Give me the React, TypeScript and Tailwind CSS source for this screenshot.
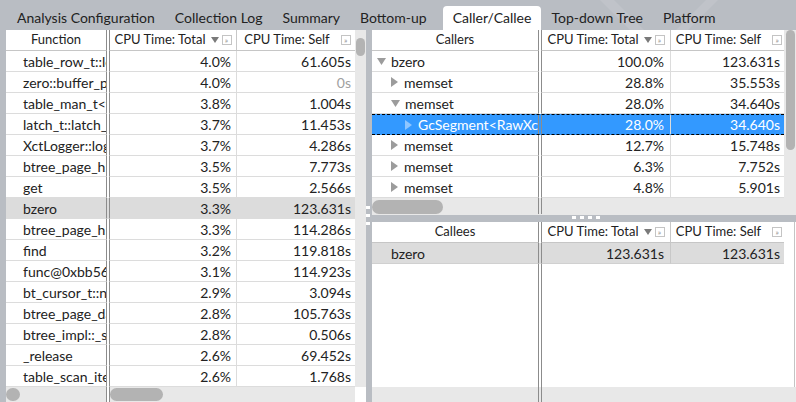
import React from 'react'

type Row = { name: string; total: string; self: string; dim?: boolean; hl?: boolean }

const leftRows: Row[] = [
  { name: 'table_row_t::load_from_store', total: '4.0%', self: '61.605s' },
  { name: 'zero::buffer_pool::fix', total: '4.0%', self: '0s', dim: true },
  { name: 'table_man_t<table_desc_t>', total: '3.8%', self: '1.004s' },
  { name: 'latch_t::latch_acquire', total: '3.7%', self: '11.453s' },
  { name: 'XctLogger::log', total: '3.7%', self: '4.286s' },
  { name: 'btree_page_h::search', total: '3.5%', self: '7.773s' },
  { name: 'get', total: '3.5%', self: '2.566s' },
  { name: 'bzero', total: '3.3%', self: '123.631s', hl: true },
  { name: 'btree_page_h::insert', total: '3.3%', self: '114.286s' },
  { name: 'find', total: '3.2%', self: '119.818s' },
  { name: 'func@0xbb5600', total: '3.1%', self: '114.923s' },
  { name: 'bt_cursor_t::next', total: '2.9%', self: '3.094s' },
  { name: 'btree_page_data::search', total: '2.8%', self: '105.763s' },
  { name: 'btree_impl::_sx_split', total: '2.8%', self: '0.506s' },
  { name: '_release', total: '2.6%', self: '69.452s' },
  { name: 'table_scan_iter_impl', total: '2.6%', self: '1.768s' },
]

type TreeRow = { name: string; depth: number; open?: boolean; total: string; self: string; sel?: boolean }

const callers: TreeRow[] = [
  { name: 'bzero', depth: 0, open: true, total: '100.0%', self: '123.631s' },
  { name: 'memset', depth: 1, total: '28.8%', self: '35.553s' },
  { name: 'memset', depth: 1, open: true, total: '28.0%', self: '34.640s' },
  { name: 'GcSegment<RawXctLog>', depth: 2, total: '28.0%', self: '34.640s', sel: true },
  { name: 'memset', depth: 1, total: '12.7%', self: '15.748s' },
  { name: 'memset', depth: 1, total: '6.3%', self: '7.752s' },
  { name: 'memset', depth: 1, total: '4.8%', self: '5.901s' },
]

const tabs = ['Analysis Configuration', 'Collection Log', 'Summary', 'Bottom-up', 'Caller/Callee', 'Top-down Tree', 'Platform']

function MoreBox() {
  return (
    <span className="inline-flex items-center justify-center w-[10px] h-[10px] border border-[#c4c4c4] text-[8px] leading-none text-[#8a8a8a] ml-[3px]">»</span>
  )
}

function SortDown() {
  return (
    <svg width="8" height="6" viewBox="0 0 8 6" className="ml-[5px]"><path d="M0 0h8L4 6z" fill="#7a7a7a" /></svg>
  )
}

function Expander({ open, light }: { open?: boolean; light?: boolean }) {
  const c = light ? '#8fc6ff' : '#9c9c9c'
  return open ? (
    <svg width="9" height="7" viewBox="0 0 9 7" className="mr-[5px] shrink-0"><path d="M0 0h9L4.5 7z" fill={c} /></svg>
  ) : (
    <svg width="7" height="10" viewBox="0 0 7 10" className="mr-[6px] shrink-0"><path d="M0 0l7 5-7 5z" fill={c} /></svg>
  )
}

function Thumb({ className }: { className: string }) {
  return <div className={`bg-[#b3b3b3] rounded-full ${className}`} />
}

function Header({ first, firstW, totalW, selfW }: { first: string; firstW: string; totalW: string; selfW: string }) {
  return (
    <div className="flex h-[21px] text-[13px]">
      <div className={`${firstW} border-r border-[#8c8c8c] border-b border-b-[#c6c6c6] flex items-center justify-center`}>{first}</div>
      <div className="w-[2px]" />
      <div className={`${totalW} border-l border-l-[#8c8c8c] border-r border-r-[#c8c8c8] border-b border-b-[#c6c6c6] flex items-center justify-center`}>
        CPU Time: Total<SortDown /><MoreBox />
      </div>
      <div className={`${selfW} border-b border-[#c6c6c6] flex items-center justify-center pl-[3px]`}>
        CPU Time: Self<span className="w-[8px]" /><MoreBox />
      </div>
    </div>
  )
}

export default function App() {
  return (
    <div className="w-[796px] h-[402px] bg-[#b9bdc3] flex flex-col overflow-hidden text-[#222] font-['Lato','Liberation_Sans',sans-serif]">
      {/* tab strip */}
      <div className="relative h-[30px] flex items-end pl-[7px] shrink-0">
        <svg className="absolute left-0 top-0" width="796" height="30">
          <path d="M600 0h14l30 30h-14z" fill="#ffffff" opacity="0.1" />
          <path d="M706 0h12l-30 30h-12z" fill="#ffffff" opacity="0.1" />
        </svg>
        {tabs.map((t) => {
          const active = t === 'Caller/Callee'
          return (
            <div
              key={t}
              className={`relative h-[24px] flex items-center pb-[2px] text-[14px] whitespace-nowrap ${
                active ? 'bg-white rounded-t-[4px] px-[10px] ml-[6px] mr-[0px]' : 'px-[10px]'
              }`}
            >
              {t}
            </div>
          )
        })}
      </div>

      <div className="flex flex-1 pl-[6px] min-h-0 text-[14px]">
        {/* left grid */}
        <div className="w-[360px] bg-white flex flex-col">
          <div className="flex flex-1 min-h-0">
            <div className="w-[349px] flex flex-col">
              <Header first="Function" firstW="w-[101px]" totalW="w-[128px]" selfW="w-[118px]" />
              {leftRows.map((r, i) => (
                <div key={i} className={`flex h-[21px] ${r.hl ? 'bg-[#dcdcdc]' : ''}`}>
                  <div className="w-[101px] border-r border-r-[#8c8c8c] border-b border-b-[#dcdcdc] pl-[17px] flex items-center overflow-hidden whitespace-nowrap">{r.name}</div>
                  <div className="w-[2px]" />
                  <div className="w-[128px] border-l border-l-[#8c8c8c] border-r border-r-[#dcdcdc] border-b border-b-[#dcdcdc] pr-[5px] flex items-center justify-end">{r.total}</div>
                  <div className={`w-[118px] border-b border-[#dcdcdc] pr-[4px] flex items-center justify-end ${r.dim ? 'text-[#a0a0a0]' : ''}`}>{r.self}</div>
                </div>
              ))}
              <div className="flex-1 flex">
                <div className="w-[101px] border-r border-[#8c8c8c]" />
                <div className="w-[2px]" />
                <div className="w-[128px] border-l border-[#8c8c8c]" />
              </div>
            </div>
            <div className="w-[11px] bg-[#e8e8e8] pt-[8px] flex justify-center">
              <Thumb className="w-[9px] h-[18px]" />
            </div>
          </div>
          <div className="h-[15px] flex shrink-0">
            <div className="w-[101px] bg-[#e8e8e8] border-r border-[#8c8c8c] flex items-center">
              <Thumb className="w-[14px] h-[13px]" />
            </div>
            <div className="w-[2px]" />
            <div className="w-[246px] bg-[#e8e8e8] border-l border-[#8c8c8c] flex items-center">
              <Thumb className="w-[53px] h-[13px]" />
            </div>
            <div className="flex-1 bg-white" />
          </div>
        </div>

        {/* vertical splitter */}
        <div className="w-[6px] flex flex-col items-start pt-[176px] gap-[5px]">
          <div className="w-[4px] h-[3px] bg-white" />
          <div className="w-[4px] h-[3px] bg-white" />
          <div className="w-[4px] h-[3px] bg-white" />
        </div>

        {/* right side */}
        <div className="flex-1 flex flex-col">
          {/* callers */}
          <div className="h-[185px] bg-white flex">
            <div className="w-[412px] flex flex-col">
              <Header first="Callers" firstW="w-[167px]" totalW="w-[130px]" selfW="w-[113px]" />
              {callers.map((r, i) => (
                <div
                  key={i}
                  className={`flex h-[21px] ${r.sel ? 'bg-[#3399ff] text-white border-y border-dashed border-black' : ''}`}
                >
                  <div
                    className={`w-[167px] border-r border-r-[#8c8c8c] ${r.sel ? '' : 'border-b border-b-[#dcdcdc]'} flex items-center overflow-hidden whitespace-nowrap`}
                    style={{ paddingLeft: 5 + r.depth * 14 }}
                  >
                    <Expander open={r.open} light={r.sel} />
                    {r.name}
                  </div>
                  <div className="w-[2px]" />
                  <div className={`w-[130px] border-l border-l-[#8c8c8c] border-r border-r-[#dcdcdc] ${r.sel ? '' : 'border-b border-b-[#dcdcdc]'} pr-[6px] flex items-center justify-end`}>{r.total}</div>
                  <div className={`w-[113px] ${r.sel ? '' : 'border-b border-[#dcdcdc]'} pr-[4px] flex items-center justify-end`}>{r.self}</div>
                </div>
              ))}
              <div className="flex-1 flex bg-[#e8e8e8] items-end pb-[1px]">
                <div className="w-[167px] h-full border-r border-[#8c8c8c] flex items-end">
                  <Thumb className="w-[71px] h-[14px]" />
                </div>
                <div className="w-[2px] h-full bg-[#e8e8e8]" />
                <div className="w-[130px] h-full border-l border-[#8c8c8c]" />
              </div>
            </div>
            <div className="w-[12px] bg-[#e8e8e8] flex justify-center pb-[40px]">
              <Thumb className="w-[9px] h-[120px]" />
            </div>
          </div>

          {/* horizontal splitter */}
          <div className="h-[7px] flex gap-[4px] pl-[200px] items-start pt-[1px]">
            <div className="w-[4px] h-[3px] bg-white" />
            <div className="w-[4px] h-[3px] bg-white" />
            <div className="w-[4px] h-[3px] bg-white" />
            <div className="w-[4px] h-[3px] bg-white" />
          </div>

          {/* callees */}
          <div className="flex-1 bg-white flex flex-col">
            <div className="flex flex-1">
              <div className="w-[412px] flex flex-col">
                <Header first="Callees" firstW="w-[167px]" totalW="w-[130px]" selfW="w-[113px]" />
                <div className="flex h-[21px] bg-[#dcdcdc]">
                  <div className="w-[167px] border-r border-r-[#8c8c8c] border-b border-b-[#d0d0d0] pl-[19px] flex items-center">bzero</div>
                  <div className="w-[2px]" />
                  <div className="w-[130px] border-l border-l-[#8c8c8c] border-r border-r-[#c8c8c8] border-b border-b-[#d0d0d0] pr-[6px] flex items-center justify-end">123.631s</div>
                  <div className="w-[113px] border-b border-[#d0d0d0] pr-[4px] flex items-center justify-end">123.631s</div>
                </div>
                <div className="flex-1 flex">
                  <div className="w-[167px] border-r border-[#8c8c8c]" />
                  <div className="w-[2px]" />
                  <div className="w-[130px] border-l border-[#8c8c8c]" />
                </div>
              </div>
              <div className="w-[11px] border-r border-[#c4c4c4]" />
            </div>
            <div className="h-[15px] flex bg-[#e8e8e8] shrink-0">
              <div className="w-[167px] border-r border-[#8c8c8c]" />
              <div className="w-[2px]" />
              <div className="w-[130px] border-l border-[#8c8c8c]" />
            </div>
          </div>
        </div>
      </div>
    </div>
  )
}
